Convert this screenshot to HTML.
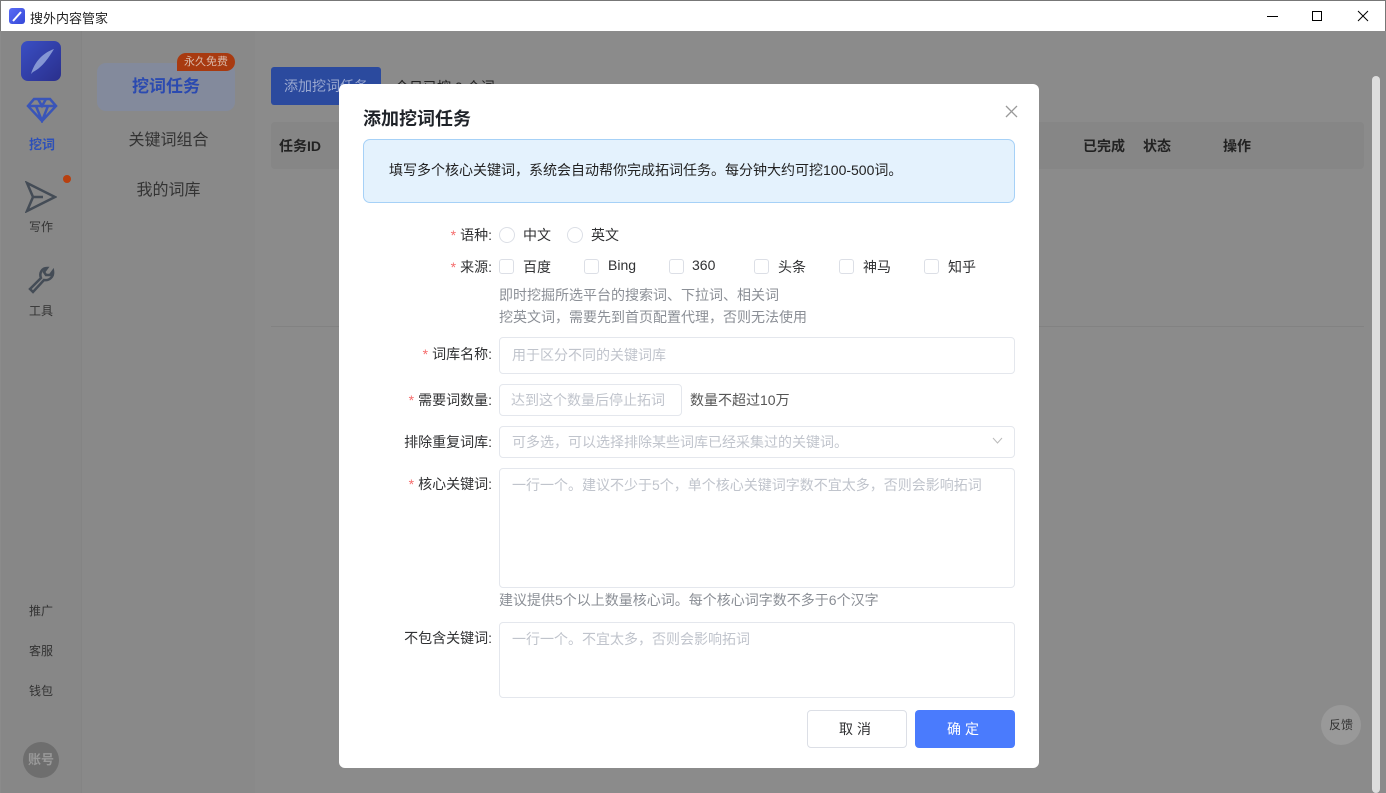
<!DOCTYPE html>
<html><head><meta charset="utf-8"><style>
*{box-sizing:border-box;margin:0;padding:0}
body{width:1386px;height:793px;overflow:hidden;font-family:"Liberation Sans","Noto Sans CJK SC",sans-serif;background:#8b8b8b;position:relative;font-size:14px;color:#303133}
.a{position:absolute}
.title{left:0;top:0;width:1386px;height:31px;background:#fff;border:1px solid #777;border-bottom:none}
.side{left:1px;top:31px;width:81px;height:762px;background:#878787;border-right:1px solid #848484}
.nav{left:82px;top:31px;width:173px;height:762px;background:#898989}
.lbl{color:#303133;text-align:right;width:130px;left:362px}
.req{color:#f56c6c;margin-right:4px}
.inp{border:1px solid #e4e7ed;border-radius:4px;background:#fff;color:#c0c4cc;padding-left:12px}
.cb{width:15px;height:15px;border:1px solid #dcdfe6;border-radius:3px;background:#fff}
.rd{width:16px;height:16px;border:1px solid #dcdfe6;border-radius:50%;background:#fff}
.tip{color:#8b8f96}
</style></head><body>
<div class="a title">
 <div class="a" style="left:8px;top:7px;width:16px;height:16px;border-radius:3px;background:linear-gradient(135deg,#5a6cf5,#3548d8)"><svg width="16" height="16"><path d="M4 13 L12 4" stroke="#fff" stroke-width="2"/></svg></div>
 <div class="a" style="left:29px;top:7px;font-size:13px;color:#222">搜外内容管家</div>
 <div class="a" style="left:1266px;top:15px;width:11px;height:1px;background:#000"></div>
 <div class="a" style="left:1311px;top:10px;width:10px;height:10px;border:1px solid #000"></div>
 <svg class="a" style="left:1356px;top:9px" width="12" height="12"><path d="M1 1L11 11M11 1L1 11" stroke="#000" stroke-width="1"/></svg>
</div>
<div class="a side">
 <div class="a" style="left:20px;top:10px;width:40px;height:40px;border-radius:7px;background:linear-gradient(135deg,#3a4fc4,#2a2f8c)"><svg width="40" height="40"><path d="M10 33 C14 20 22 12 33 8 C28 16 22 26 12 31" fill="#8ea0d8" opacity=".9"/></svg></div>
 <svg class="a" style="left:25px;top:66px" width="32" height="26"><path d="M8 2H24L30 9L16 24L2 9Z M2 9H30 M12 2L16 9L20 2 M10 9L16 24L22 9" fill="none" stroke="#3a55b8" stroke-width="2.5"/></svg>
 <div class="a" style="left:28px;top:103px;font-size:13px;font-weight:bold;color:#2d50b8">挖词</div>
 <div class="a" style="left:62px;top:144px;width:8px;height:8px;border-radius:50%;background:#b8400f"></div>
 <svg class="a" style="left:24px;top:150px" width="32" height="32"><path d="M2 2L30 16L2 30L8 16Z M8 16H18" fill="none" stroke="#444c56" stroke-width="2.5"/></svg>
 <div class="a" style="left:28px;top:187px;font-size:12px;color:#333">写作</div>
 <svg class="a" style="left:25px;top:234px" width="30" height="30"><path d="M4 24L15 13C13 8 16 3 21 3L18 7L20 10L24 10L27 6C28 12 23 16 18 15L7 27Z" fill="none" stroke="#444c56" stroke-width="2.5"/></svg>
 <div class="a" style="left:28px;top:271px;font-size:12px;color:#333">工具</div>
 <div class="a" style="left:28px;top:571px;font-size:12px;color:#333">推广</div>
 <div class="a" style="left:28px;top:611px;font-size:12px;color:#333">客服</div>
 <div class="a" style="left:28px;top:651px;font-size:12px;color:#333">钱包</div>
 <div class="a" style="left:22px;top:711px;width:36px;height:36px;border-radius:50%;background:#6e6e6e;color:#999;font-size:13px;font-weight:bold;line-height:36px;text-align:center">账号</div>
</div>
<div class="a nav">
 <div class="a" style="left:15px;top:32px;width:138px;height:48px;border-radius:9px;background:#838a9c;color:#2b4ab0;font-size:17px;font-weight:bold;text-align:center;line-height:48px">挖词任务</div>
 <div class="a" style="left:95px;top:22px;width:58px;height:18px;border-radius:9px 9px 9px 0;background:#a83a10;color:#d9b8a8;font-size:11px;text-align:center;line-height:18px">永久免费</div>
 <div class="a" style="left:0;top:95px;width:173px;text-align:center;font-size:16px;color:#333">关键词组合</div>
 <div class="a" style="left:0;top:145px;width:173px;text-align:center;font-size:16px;color:#333">我的词库</div>
</div>
<div class="a" style="left:271px;top:67px;width:110px;height:38px;border-radius:3px;background:#2b4a9e;color:#9aa8d0;font-size:14px;line-height:38px;padding-left:13px">添加挖词任务</div>
<div class="a" style="left:395px;top:77px;color:#222;font-size:14px">今日已挖 0 个词</div>
<div class="a" style="left:271px;top:122px;width:1093px;height:47px;background:#868686;border-radius:4px"></div>
<div class="a" style="left:279px;top:136px;font-weight:bold;color:#222">任务ID</div>
<div class="a" style="left:1083px;top:136px;font-weight:bold;color:#222">已完成</div>
<div class="a" style="left:1143px;top:136px;font-weight:bold;color:#222">状态</div>
<div class="a" style="left:1223px;top:136px;font-weight:bold;color:#222">操作</div>
<div class="a" style="left:271px;top:326px;width:1093px;height:1px;background:#828282"></div>
<div class="a" style="left:1372px;top:76px;width:8px;height:717px;background:#ddd;border-radius:4px"></div>
<div class="a" style="left:1321px;top:705px;width:40px;height:40px;border-radius:50%;background:#999;color:#333;font-size:12px;text-align:center;line-height:40px">反馈</div>

<div class="a" style="left:339px;top:84px;width:700px;height:684px;background:#fff;border-radius:6px">
 <div class="a" style="left:24px;top:21px;font-size:18px;font-weight:bold;color:#1f2329">添加挖词任务</div>
 <svg class="a" style="left:666px;top:21px" width="13" height="13"><path d="M1 1L12 12M12 1L1 12" stroke="#999" stroke-width="1.3"/></svg>
 <div class="a" style="left:24px;top:55px;width:652px;height:64px;background:#e4f2fd;border:1px solid #a6d1f7;border-radius:7px;padding:20px 0 0 25px;font-size:14px;color:#222">填写多个核心关键词，系统会自动帮你完成拓词任务。每分钟大约可挖100-500词。</div>
</div>
<div class="a lbl" style="top:225px"><span class="req">*</span>语种:</div>
<div class="a rd" style="left:499px;top:227px"></div><div class="a" style="left:523px;top:225px">中文</div>
<div class="a rd" style="left:567px;top:227px"></div><div class="a" style="left:591px;top:225px">英文</div>
<div class="a lbl" style="top:257px"><span class="req">*</span>来源:</div>
<div class="a cb" style="left:499px;top:259px"></div><div class="a" style="left:523px;top:257px">百度</div>
<div class="a cb" style="left:584px;top:259px"></div><div class="a" style="left:608px;top:257px">Bing</div>
<div class="a cb" style="left:669px;top:259px"></div><div class="a" style="left:692px;top:257px">360</div>
<div class="a cb" style="left:754px;top:259px"></div><div class="a" style="left:778px;top:257px">头条</div>
<div class="a cb" style="left:839px;top:259px"></div><div class="a" style="left:863px;top:257px">神马</div>
<div class="a cb" style="left:924px;top:259px"></div><div class="a" style="left:948px;top:257px">知乎</div>
<div class="a tip" style="left:499px;top:285px">即时挖掘所选平台的搜索词、下拉词、相关词</div>
<div class="a tip" style="left:499px;top:307px">挖英文词，需要先到首页配置代理，否则无法使用</div>
<div class="a lbl" style="top:344px"><span class="req">*</span>词库名称:</div>
<div class="a inp" style="left:499px;top:337px;width:516px;height:37px;line-height:35px">用于区分不同的关键词库</div>
<div class="a lbl" style="top:390px"><span class="req">*</span>需要词数量:</div>
<div class="a inp" style="left:499px;top:384px;width:183px;height:32px;line-height:30px;padding-left:11px">达到这个数量后停止拓词</div>
<div class="a" style="left:690px;top:390px;color:#555">数量不超过10万</div>
<div class="a lbl" style="top:432px">排除重复词库:</div>
<div class="a inp" style="left:499px;top:426px;width:516px;height:32px;line-height:30px">可多选，可以选择排除某些词库已经采集过的关键词。</div>
<svg class="a" style="left:992px;top:437px" width="11" height="8"><path d="M1 1L5.5 6L10 1" fill="none" stroke="#bbb"/></svg>
<div class="a lbl" style="top:474px"><span class="req">*</span>核心关键词:</div>
<div class="a inp" style="left:499px;top:468px;width:516px;height:120px;padding-top:6px">一行一个。建议不少于5个，单个核心关键词字数不宜太多，否则会影响拓词</div>
<div class="a tip" style="left:499px;top:590px">建议提供5个以上数量核心词。每个核心词字数不多于6个汉字</div>
<div class="a lbl" style="top:628px">不包含关键词:</div>
<div class="a inp" style="left:499px;top:622px;width:516px;height:76px;padding-top:6px">一行一个。不宜太多，否则会影响拓词</div>
<div class="a" style="left:807px;top:710px;width:100px;height:38px;border:1px solid #dcdfe6;border-radius:4px;background:#fff;text-align:center;line-height:36px;letter-spacing:4px">取消</div>
<div class="a" style="left:915px;top:710px;width:100px;height:38px;border-radius:4px;background:#4a7bfd;color:#fff;text-align:center;line-height:38px;letter-spacing:4px">确定</div>
</body></html>
